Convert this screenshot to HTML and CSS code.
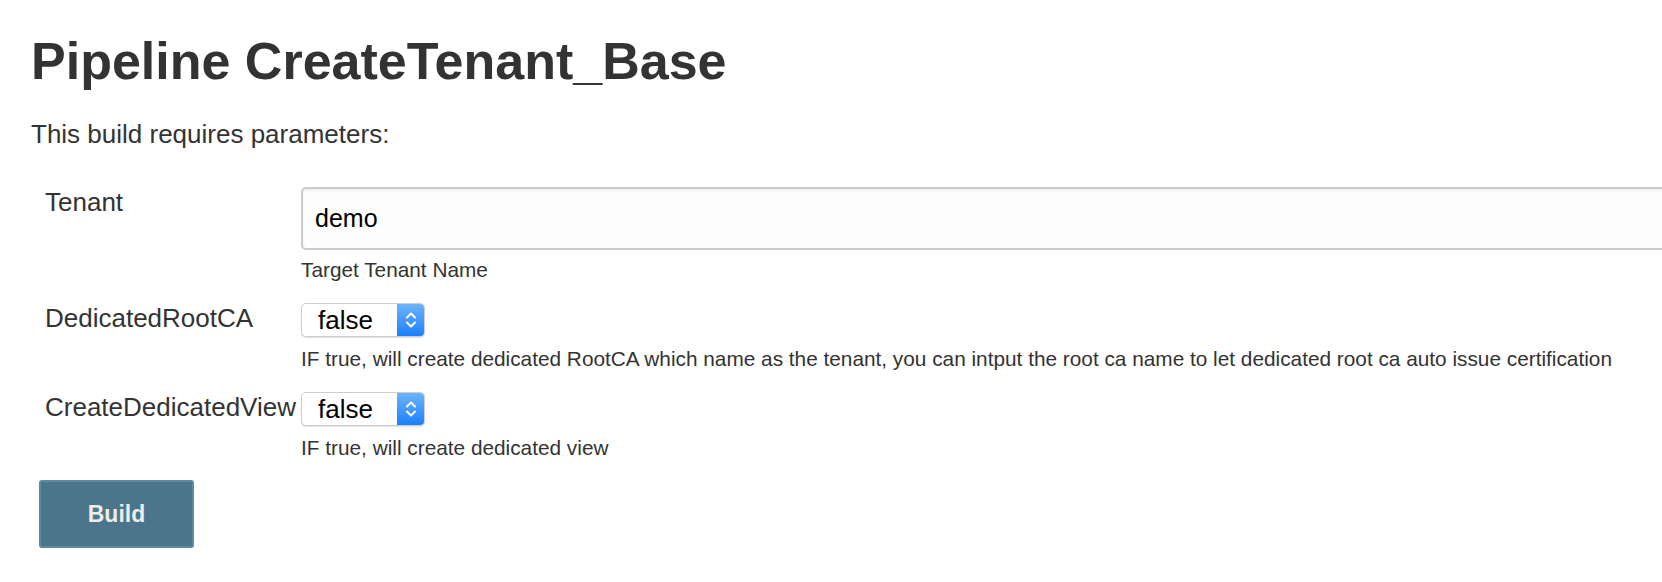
FILE: index.html
```html
<!DOCTYPE html>
<html lang="en">
<head>
<meta charset="utf-8">
<title>Pipeline CreateTenant_Base</title>
<link rel="stylesheet" href="styles.css">
</head>
<body>
<main class="page">
  <h1 class="title">Pipeline CreateTenant_Base</h1>
  <p class="intro">This build requires parameters:</p>
  <form class="params">
    <div class="param-name">Tenant</div>
    <div class="param-value">
      <input class="text-input" type="text" value="demo">
      <div class="help">Target Tenant Name</div>
    </div>

    <div class="param-name">DedicatedRootCA</div>
    <div class="param-value">
      <span class="select">
        <select><option>false</option><option>true</option></select>
        <span class="stepper"><svg width="12" height="22" viewBox="0 0 12 22"><path d="M2 8.5 L6 4.5 L10 8.5 M2 13.5 L6 17.5 L10 13.5" fill="none" stroke="#fff" stroke-width="1.9" stroke-linecap="round" stroke-linejoin="round"/></svg></span>
      </span>
      <div class="help help-select">IF true, will create dedicated RootCA which name as the tenant, you can intput the root ca name to let dedicated root ca auto issue certification</div>
    </div>

    <div class="param-name">CreateDedicatedView</div>
    <div class="param-value">
      <span class="select">
        <select><option>false</option><option>true</option></select>
        <span class="stepper"><svg width="12" height="22" viewBox="0 0 12 22"><path d="M2 8.5 L6 4.5 L10 8.5 M2 13.5 L6 17.5 L10 13.5" fill="none" stroke="#fff" stroke-width="1.9" stroke-linecap="round" stroke-linejoin="round"/></svg></span>
      </span>
      <div class="help help-select">IF true, will create dedicated view</div>
    </div>
  </form>
  <button class="build-btn" type="button">Build</button>
</main>
</body>
</html>
```

FILE: styles.css
```css
html, body {
  margin: 0;
  padding: 0;
  overflow: hidden;
  background: #fff;
}

body {
  font-family: "Liberation Sans", Arial, Helvetica, sans-serif;
  color: #333;
}

.page {
  padding: 31px 0 0 31px;
}

.title {
  margin: 0;
  font-size: 52px;
  line-height: 60px;
  font-weight: bold;
  color: #333;
}

.intro {
  margin: 28px 0 0 0;
  font-size: 26px;
  line-height: 30px;
}

.params {
  margin: 38px 0 0 14px;
  display: grid;
  grid-template-columns: auto 1fr;
  column-gap: 5px;
  row-gap: 21px;
}

.param-name {
  font-size: 26px;
  line-height: 30px;
  white-space: nowrap;
}

.param-value {
  display: flex;
  flex-direction: column;
  align-items: flex-start;
  min-width: 0;
}

.text-input {
  box-sizing: border-box;
  width: 1500px;
  height: 63px;
  border: 2px solid #cbcbcb;
  border-radius: 5px;
  box-shadow: inset 0 2px 3px rgba(0, 0, 0, 0.06);
  background: #fdfdfd;
  padding: 0 12px;
  font-family: "Liberation Sans", Arial, sans-serif;
  font-size: 25px;
  color: #000;
  outline: none;
}

.help {
  margin-top: 8px;
  font-size: 20.8px;
  line-height: 24px;
  color: #333;
  white-space: nowrap;
}

.help-select {
  margin-top: 10px;
}

.select {
  display: inline-flex;
  box-sizing: border-box;
  height: 34px;
  border: 1px solid #cdcdcd;
  border-radius: 5px;
  overflow: hidden;
  background: #fff;
  box-shadow: 0 1px 1px rgba(0, 0, 0, 0.12);
}

.select select {
  appearance: none;
  -webkit-appearance: none;
  border: 0;
  margin: 0;
  width: 95px;
  height: 32px;
  padding: 0 0 0 16px;
  background: transparent;
  font-family: "Liberation Sans", Arial, sans-serif;
  font-size: 26px;
  color: #000;
  outline: none;
}

.stepper {
  width: 27px;
  display: flex;
  align-items: center;
  justify-content: center;
  background: linear-gradient(#6db4fb, #1b80fb);
}

.build-btn {
  margin: 20px 0 0 8px;
  box-sizing: border-box;
  width: 155px;
  height: 68px;
  background: #4b758b;
  border: 2px solid #5b8aa2;
  border-radius: 3px;
  color: #ececec;
  font-family: "Liberation Sans", Arial, sans-serif;
  font-size: 23px;
  font-weight: bold;
  padding: 0;
}
```
